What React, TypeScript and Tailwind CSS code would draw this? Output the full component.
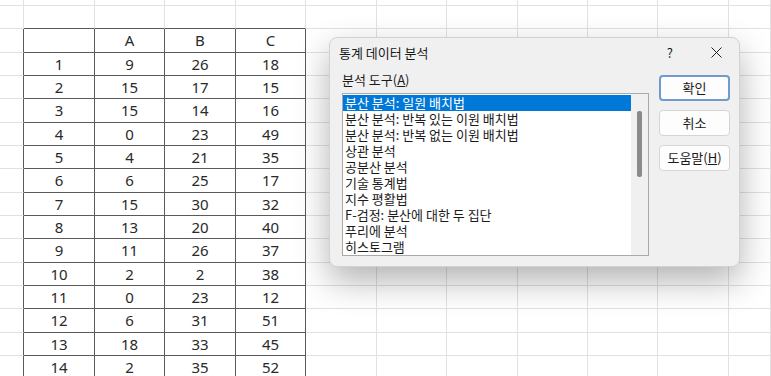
import React from "react";

const header = ["", "A", "B", "C"];
const rows = [
  [1, 9, 26, 18],
  [2, 15, 17, 15],
  [3, 15, 14, 16],
  [4, 0, 23, 49],
  [5, 4, 21, 35],
  [6, 6, 25, 17],
  [7, 15, 30, 32],
  [8, 13, 20, 40],
  [9, 11, 26, 37],
  [10, 2, 2, 38],
  [11, 0, 23, 12],
  [12, 6, 31, 51],
  [13, 18, 33, 45],
  [14, 2, 35, 52],
];

const tools = [
  "분산 분석: 일원 배치법",
  "분산 분석: 반복 있는 이원 배치법",
  "분산 분석: 반복 없는 이원 배치법",
  "상관 분석",
  "공분산 분석",
  "기술 통계법",
  "지수 평활법",
  "F-검정: 분산에 대한 두 집단",
  "푸리에 분석",
  "히스토그램",
];

function Sheet() {
  const cells: React.ReactNode[] = [];
  for (let r = 0; r < 17; r++) {
    for (let c = 0; c < 12; c++) {
      const darkRight = r >= 2 && c <= 4;
      const darkBottom = r >= 1 && c >= 1 && c <= 4;
      let text: string | number = "";
      if (r === 2 && c <= 4 && c >= 1) text = header[c - 1];
      if (r >= 3 && c >= 1 && c <= 4) text = rows[r - 3][c - 1];
      cells.push(
        <div
          key={`${r}-${c}`}
          className={`flex items-center justify-center border-r border-b text-[15px] text-[#2a2a2a] ${
            darkRight ? "border-r-[#5a5a5a]" : "border-r-[#e1e1e1]"
          } ${darkBottom ? "border-b-[#5a5a5a]" : "border-b-[#e1e1e1]"}`}
        >
          {text}
        </div>
      );
    }
  }
  return (
    <div className="grid grid-cols-[24px_71px_70px_71px_70px_71px_70px_71px_70px_70px_71px_1fr] grid-rows-[6px_repeat(16,23.33px)]">
      {cells}
    </div>
  );
}

function Button({ children, primary }: { children: React.ReactNode; primary?: boolean }) {
  return (
    <div
      className={`flex items-center justify-center h-[26px] rounded-[4px] bg-[#fdfdfd] text-[13px] text-[#1a1a1a] ${
        primary ? "border-2 border-[#6f9bd0]" : "border border-[#d5d5d5]"
      }`}
    >
      {children}
    </div>
  );
}

function Dialog() {
  return (
    <div className="absolute left-[329px] top-[37px] w-[411px] h-[230px] flex flex-col rounded-[8px] border border-[#d2d2d2] bg-[#f0f0f0] shadow-[0_14px_34px_rgba(0,0,0,0.3)] font-['Noto_Sans_CJK_KR',sans-serif] text-[#1a1a1a]">
      <div className="flex items-center h-[29px] pl-[9px] pr-[17px]">
        <span className="text-[13px]">통계 데이터 분석</span>
        <span className="ml-auto mr-[38px] text-[13px]">?</span>
        <svg width="11" height="11" viewBox="0 0 11 11" className="text-[#222]">
          <path d="M0.5 0.5 L10.5 10.5 M10.5 0.5 L0.5 10.5" stroke="currentColor" strokeWidth="1" />
        </svg>
      </div>
      <div className="flex gap-[10px] pl-[12px]">
        <div className="flex flex-col w-[307px]">
          <div className="h-[26px] flex items-center text-[13px]">
            분석 도구(<span className="underline">A</span>)
          </div>
          <div className="flex h-[163px] border border-[#a9a9a9] bg-white">
            <div className="flex-1 flex flex-col pt-[1px]">
              {tools.map((t, i) => (
                <div
                  key={t}
                  className={`h-[16px] pl-[2px] text-[13px] leading-[16px] ${
                    i === 0 ? "bg-[#0078d7] text-white" : "text-[#1a1a1a]"
                  }`}
                >
                  {t}
                </div>
              ))}
            </div>
            <div className="w-[17px] bg-[#f0f0f0] pt-[17px] flex justify-center">
              <div className="w-[5px] h-[66px] rounded-[2px] bg-[#8a8a8a]" />
            </div>
          </div>
        </div>
        <div className="flex flex-col gap-[9px] w-[71px] pt-[8px]">
          <Button primary>확인</Button>
          <Button>취소</Button>
          <Button>
            도움말(<span className="underline">H</span>)
          </Button>
        </div>
      </div>
    </div>
  );
}

export default function App() {
  return (
    <div className="relative w-[771px] h-[376px] overflow-hidden bg-white font-['Noto_Sans','Noto_Sans_CJK_KR',sans-serif]">
      <Sheet />
      <Dialog />
    </div>
  );
}
